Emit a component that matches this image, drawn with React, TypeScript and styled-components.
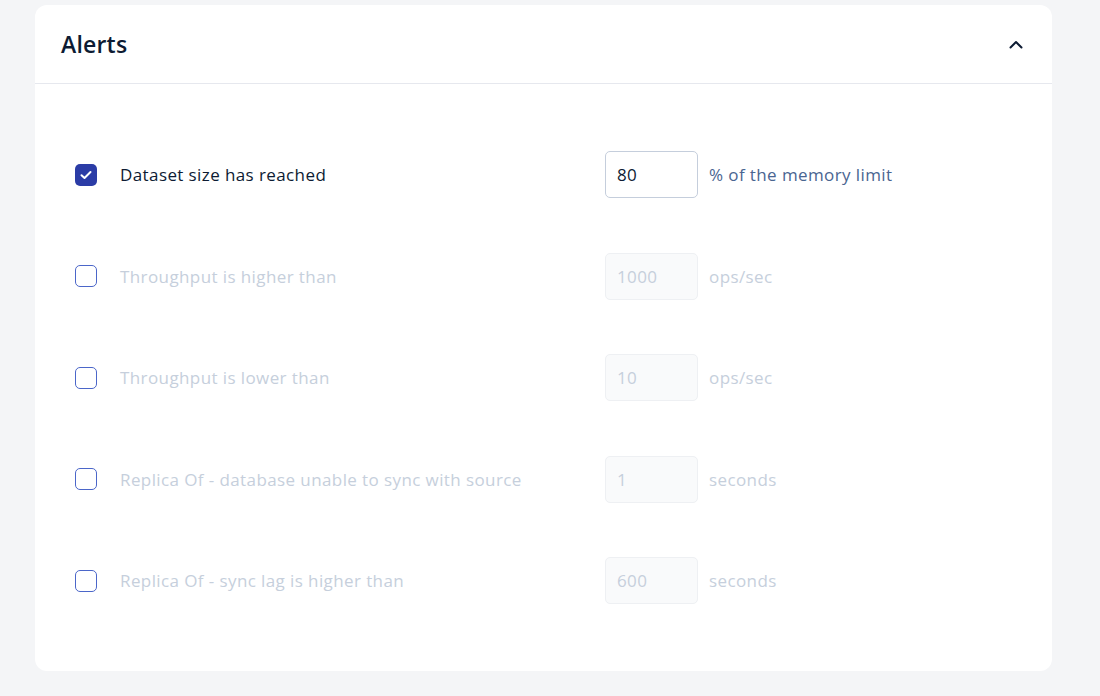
import React, { useState } from 'react';
import styled, { createGlobalStyle } from 'styled-components';

const GlobalStyle = createGlobalStyle`
  html, body {
    margin: 0;
    padding: 0;
    background: #f4f5f7;
    font-family: "Open Sans", Lato, sans-serif;
  }
`;

const Page = styled.div`
  padding: 5px 48px 26px 35px;
`;

const Card = styled.section`
  background: #ffffff;
  border-radius: 12px;
  width: 1017px;
`;

const Header = styled.header`
  height: 79px;
  display: flex;
  align-items: center;
  justify-content: space-between;
  padding: 0 26px 0 26px;
  border-bottom: 1px solid #e6e8ee;
  box-sizing: border-box;
`;

const Title = styled.h2`
  margin: 0;
  font-size: 23px;
  font-weight: 600;
  color: #0d1b33;
  letter-spacing: 0.2px;
`;

const Toggle = styled.button`
  border: 0;
  background: none;
  padding: 0;
  width: 20px;
  height: 20px;
  display: flex;
  align-items: center;
  justify-content: center;
  cursor: pointer;
`;

const Body = styled.div`
  padding: 40px 0 39px 40px;
`;

const Row = styled.div`
  height: 101.5px;
  display: flex;
  align-items: center;
  font-size: 17px;
  letter-spacing: 0.4px;
`;

const Check = styled.span<{ $on: boolean }>`
  width: 22px;
  height: 22px;
  box-sizing: border-box;
  border-radius: 5px;
  border: ${({ $on }) => ($on ? 'none' : '1.5px solid #4b66c9')};
  background: ${({ $on }) => ($on ? '#2b3ca6' : '#ffffff')};
  display: flex;
  align-items: center;
  justify-content: center;
  flex-shrink: 0;
  cursor: pointer;
`;

const Label = styled.span<{ $on: boolean }>`
  margin-left: 23px;
  width: 485px;
  color: ${({ $on }) => ($on ? '#0d1b33' : '#c6cfdc')};
`;

const Field = styled.input<{ $on: boolean }>`
  width: 93px;
  height: 47px;
  box-sizing: border-box;
  border-radius: 5px;
  border: 1px solid ${({ $on }) => ($on ? '#c5cedc' : '#eef0f3')};
  background: ${({ $on }) => ($on ? '#ffffff' : '#f9fafb')};
  padding: 0 11px;
  font-family: inherit;
  font-size: inherit;
  letter-spacing: inherit;
  color: ${({ $on }) => ($on ? '#0d1b33' : '#c6cfdc')};
  outline: none;
`;

const Unit = styled.span<{ $on: boolean }>`
  margin-left: 11px;
  color: ${({ $on }) => ($on ? '#4a6591' : '#c6cfdc')};
`;

const alerts = [
  { label: 'Dataset size has reached', value: '80', unit: '% of the memory limit', on: true },
  { label: 'Throughput is higher than', value: '1000', unit: 'ops/sec', on: false },
  { label: 'Throughput is lower than', value: '10', unit: 'ops/sec', on: false },
  { label: 'Replica Of - database unable to sync with source', value: '1', unit: 'seconds', on: false },
  { label: 'Replica Of - sync lag is higher than', value: '600', unit: 'seconds', on: false },
];

const App = (): JSX.Element => {
  const [state, setState] = useState(alerts);

  const flip = (i: number) =>
    setState(s => s.map((a, j) => (j === i ? { ...a, on: !a.on } : a)));

  return (
    <Page>
      <GlobalStyle />
      <Card>
        <Header>
          <Title>Alerts</Title>
          <Toggle aria-label="Collapse">
            <svg width="14" height="9" viewBox="0 0 14 9" fill="none">
              <path d="M1.5 7.5 7 2l5.5 5.5" stroke="#0d1b33" strokeWidth="2" strokeLinecap="round" strokeLinejoin="round" />
            </svg>
          </Toggle>
        </Header>
        <Body>
          {state.map((a, i) => (
            <Row key={i}>
              <Check $on={a.on} onClick={() => flip(i)}>
                {a.on && (
                  <svg width="12" height="10" viewBox="0 0 12 10" fill="none">
                    <path d="M1.5 5.2 4.5 8 10.5 2" stroke="#fff" strokeWidth="2" strokeLinecap="round" strokeLinejoin="round" />
                  </svg>
                )}
              </Check>
              <Label $on={a.on}>{a.label}</Label>
              <Field $on={a.on} disabled={!a.on} defaultValue={a.value} />
              <Unit $on={a.on}>{a.unit}</Unit>
            </Row>
          ))}
        </Body>
      </Card>
    </Page>
  );
};

export default App;
